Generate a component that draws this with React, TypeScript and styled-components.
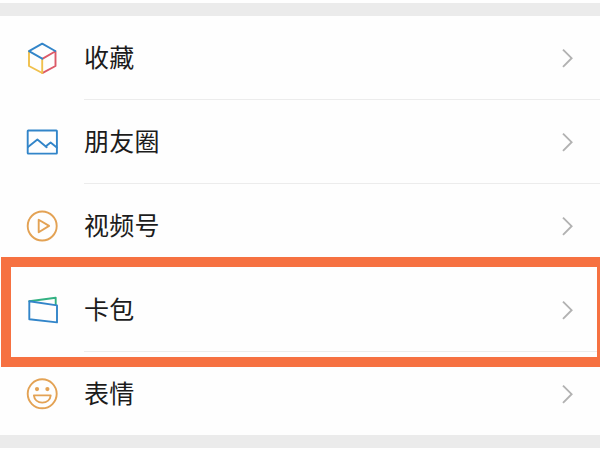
import React from 'react';
import styled, { createGlobalStyle } from 'styled-components';

const GlobalStyle = createGlobalStyle`
  * { box-sizing: border-box; }
  body { margin: 0; background: #fefefe; overflow: hidden; }
`;

const Page = styled.main`
  position: relative;
  width: 600px;
  height: 450px;
  padding-top: 3px;
  background: #fefefe;
  overflow: hidden;
  font-family: 'Noto Sans CJK SC', sans-serif;
`;

const Band = styled.div`
  height: 13px;
  background: #ebebeb;
`;

const Menu = styled.ul`
  margin: 0;
  padding: 0;
  list-style: none;
  height: 419px;
`;

const Row = styled.li`
  display: flex;
  height: 84px;
  padding-left: 24px;
`;

const IconSlot = styled.span`
  display: flex;
  align-items: center;
  width: 60px;
`;

const Content = styled.div<{ $divided: boolean }>`
  flex: 1;
  display: flex;
  align-items: center;
  justify-content: space-between;
  padding-right: 26px;
  border-bottom: 1px solid ${(p) => (p.$divided ? '#ececec' : 'transparent')};
`;

const Label = styled.span`
  padding-bottom: 3px;
  font-size: 25px;
  line-height: 36px;
  letter-spacing: 0.3px;
  color: #1c1c1c;
`;

const Highlight = styled.div`
  position: absolute;
  top: 257px;
  left: 1px;
  width: 606px;
  height: 110px;
  border: 10px solid #f67141;
  pointer-events: none;
`;

const Glyph = styled.svg`
  display: block;
  fill: none;
  stroke-width: 1.9;
  stroke-linejoin: round;
  stroke-linecap: round;
`;

const BLUE = '#3285c9';
const ORANGE = '#e3a254';

const Icon = ({ children }: { children: React.ReactNode }) => (
  <Glyph width="36" height="36" viewBox="0 0 36 36">{children}</Glyph>
);

const CubeIcon = () => (
  <Icon>
    <path d="M5 11.2V26l13.2 7" stroke="#f0c04c" />
    <path d="M18.7 32.8l12.8-6.8V11.2l-12.8 7.4" stroke="#dc5a68" />
    <path d="M18.2 19v14" stroke="#f0c04c" />
    <path d="M18.2 18.7L5 11.2l13.2-7.5 13 7.3" stroke={BLUE} />
  </Icon>
);

const PhotoIcon = () => (
  <Icon>
    <rect x="3.7" y="6.5" width="29.2" height="23.1" rx="0.6" stroke={BLUE} />
    <path d="M4 23l9.4-7.4 9.3 7.6M21.6 22.6l5-4 6.2 5" stroke={BLUE} />
  </Icon>
);

const VideoIcon = () => (
  <Icon>
    <circle cx="18.2" cy="18" r="14.5" stroke={ORANGE} />
    <path d="M14.7 11.8v12.4l10.4-6.3z" stroke={ORANGE} />
  </Icon>
);

const WalletIcon = () => (
  <Icon>
    <path d="M5.3 9.3l26.4-3.6v7" stroke="#32b182" />
    <path d="M5.3 9.3L33 13.4v17L5.3 27.2z" stroke={BLUE} />
  </Icon>
);

const SmileIcon = () => (
  <Icon>
    <circle cx="18.2" cy="17.8" r="14.5" stroke={ORANGE} />
    <circle cx="13" cy="13.1" r="2.1" fill={ORANGE} stroke="none" />
    <circle cx="23.4" cy="13.1" r="2.1" fill={ORANGE} stroke="none" />
    <path d="M9.9 19.4h16.8c-.4 4.4-3.8 7.2-8.4 7.2s-8-2.8-8.4-7.2z" stroke={ORANGE} />
  </Icon>
);

const Chevron = () => (
  <Glyph width="12" height="20" viewBox="0 0 12 20">
    <path d="M1 1.6l8.6 8.6L1 18.8" stroke="#b2b2b2" strokeLinecap="butt" strokeLinejoin="miter" />
  </Glyph>
);

const items = [
  { label: '收藏', Art: CubeIcon, divided: true },
  { label: '朋友圈', Art: PhotoIcon, divided: true },
  { label: '视频号', Art: VideoIcon, divided: false },
  { label: '卡包', Art: WalletIcon, divided: true },
  { label: '表情', Art: SmileIcon, divided: false },
];

export default function App() {
  return (
    <Page>
      <GlobalStyle />
      <Band />
      <Menu>
        {items.map(({ label, Art, divided }) => (
          <Row key={label}>
            <IconSlot><Art /></IconSlot>
            <Content $divided={divided}>
              <Label>{label}</Label>
              <Chevron />
            </Content>
          </Row>
        ))}
      </Menu>
      <Band />
      <Highlight />
    </Page>
  );
}
